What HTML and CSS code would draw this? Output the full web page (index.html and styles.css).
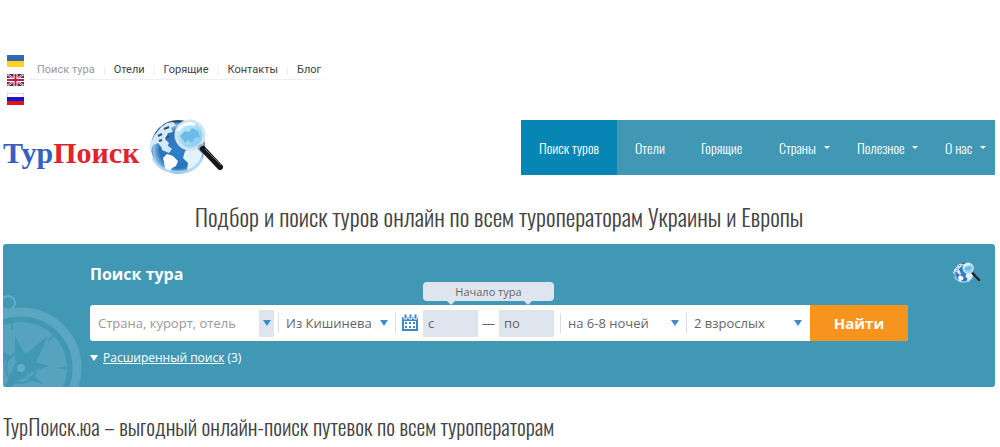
FILE: index.html
```html
<!DOCTYPE html>
<html lang="ru">
<head>
<meta charset="utf-8">
<meta name="viewport" content="width=device-width, initial-scale=1">
<title>ТурПоиск</title>
<link rel="stylesheet" href="styles.css">
</head>
<body>
<svg class="defs" aria-hidden="true">
  <defs>
    <radialGradient id="sea" cx="50%" cy="55%" r="52%">
      <stop offset="0" stop-color="#2f83cc"/>
      <stop offset=".65" stop-color="#2c72b8"/>
      <stop offset=".88" stop-color="#8fc4e8"/>
      <stop offset="1" stop-color="#1d4f80"/>
    </radialGradient>
    <linearGradient id="glass" x1="0" y1="0" x2="1" y2="1">
      <stop offset="0" stop-color="#c9effb"/>
      <stop offset="1" stop-color="#7cc8ef"/>
    </linearGradient>
    <symbol id="globe" viewBox="0 0 76 58">
      <circle cx="29" cy="28" r="27" fill="url(#sea)"/>
      <path d="M5 17 12 8l6-4 6-1 3 3-5 3 2 4-5 1-3 6 4 4-2 4-5 1-4-5-5 2-2 6-2-4zM12 25l6 1 5 4-3 4-7-3z" fill="#d5e8f3"/>
      <path d="M14 39l4-4 6 2 5 5-2 5-4 2-3 6-4-5-1-7z" fill="#fff"/>
      <path d="M36 32l6-3 7 1 4 5-2 8-5 6-3 4-5-2 1-7-5-5z" fill="#e2f1fa"/>
      <path d="M4 39c4 9 13 14 25 14s20-4 24-14" fill="none" stroke="#a8d7f2" stroke-width="3" opacity=".8"/>
      <path d="M9 17l4-2m2-5 5-2m-3 11 3-2M10 22l3-1" stroke="#28547c" stroke-width="2"/>
      <circle cx="41" cy="16" r="14" fill="url(#glass)" stroke="#d3e4ec" stroke-width="3"/>
      <path d="M31 17l5-5 4 1 3-4 6 3 2 6-5 1-3 5-4-3-3 3-3-4z" fill="#6bbce6"/>
      <path d="M29 12c4-7 11-9 17-6" fill="none" stroke="#f4fdff" stroke-width="3"/>
      <path d="M50 26l5 5" stroke="#a3a9ac" stroke-width="4"/>
      <path d="M54 30 71 48" stroke="#17181b" stroke-width="6" stroke-linecap="round"/>
      <path d="M56 30 72 46" stroke="#70757a" stroke-width="1"/>
    </symbol>
  </defs>
</svg>
<div class="page">
  <div class="topbar">
    <div class="langs">
      <a href="#" aria-label="Українська"><svg viewBox="0 0 17 12"><path fill="#3269b1" d="M0 0h17v6H0z"/><path fill="#ffd21c" d="M0 6h17v6H0z"/></svg></a>
      <a href="#" aria-label="English"><svg viewBox="0 0 17 12"><path fill="#273578" d="M0 0h17v12H0z"/><path d="m0 0 17 12M17 0 0 12" stroke="#fff" stroke-width="2"/><path d="m0 0 17 12M17 0 0 12" stroke="#d72b3d" stroke-width="1"/><path d="M8.500 0v12M0 6h17" stroke="#fff" stroke-width="4"/><path d="M8.500 0v12M0 6h17" stroke="#d5182e" stroke-width="2"/></svg></a>
      <a href="#" aria-label="Русский"><svg viewBox="0 0 17 12"><path fill="#fff" stroke="#bbb" d="M0 0h17v12H0z"/><path fill="#1717c8" d="M0 4h17v4H0z"/><path fill="#e3131b" d="M0 8h17v4H0z"/></svg></a>
    </div>
    <nav class="topnav">
      <a class="current" href="#">Поиск тура</a><a href="#">Отели</a><a href="#">Горящие</a><a href="#">Контакты</a><a href="#">Блог</a>
    </nav>
  </div>

  <header class="header">
    <a class="logo" href="#"><span class="logo-text">Тур<span class="logo-red">Поиск</span></span><svg class="logo-globe" aria-hidden="true"><use href="#globe"/></svg></a>
    <nav class="mainnav">
      <a class="active" href="#">Поиск туров</a>
      <a href="#">Отели</a>
      <a href="#">Горящие</a>
      <a class="more" href="#">Страны</a>
      <a class="more" href="#">Полезное</a>
      <a class="more" href="#">О нас</a>
    </nav>
  </header>

  <h1 class="title">Подбор и поиск туров онлайн по всем туроператорам Украины и Европы</h1>

  <section class="panel">
    <svg class="compass" viewBox="0 0 84 94" aria-hidden="true">
      <circle cx="5" cy="10" r="7" fill="none" stroke="#65adc6" stroke-width="2"/>
      <circle cx="18" cy="75" r="56" fill="none" stroke-width="9" stroke="#5ba6c1"/>
      <circle cx="18" cy="75" r="46" fill="#56a3bf"/>
      <g fill="#4198b5">
        <path d="M12 43 20 58 24 69 12 68z"/>
        <path d="M45 43 28 80 0 99 12 70z"/>
        <path d="M28 68 46 73 26 80z"/>
        <path d="m30 82 10 9-16-5zM0 59l10 5-10 5z"/>
      </g>
      <circle cx="18" cy="75" r="15" fill="none" stroke="#4198b5" stroke-width="2"/>
      <path d="M9 30v7M50 43l-5 5M63 75h-6" stroke="#4198b5" stroke-width="2"/>
      <circle cx="18" cy="75" r="4" fill="#65adc6"/>
    </svg>
    <div class="panel-main">
      <h2 class="panel-title">Поиск тура</h2>
      <form class="search">
        <div class="field dest">
          <input type="text" aria-label="Страна, курорт, отель" placeholder="Страна, курорт, отель">
          <button class="drop" type="button" aria-label="Показать список"></button>
        </div>
        <div class="field city"><select aria-label="Город вылета"><option>Из Кишинева</option></select></div>
        <div class="field dates">
          <svg class="calendar" viewBox="0 0 18 18" aria-hidden="true">
            <path d="M1 3h16v14H1z" fill="#3b86cc"/>
            <path d="M3 7h12v8H3z" fill="#fff"/>
            <path d="M3 0h3v5H3zM8 0h3v5H8zM13 0h3v5h-3z" fill="#3b86cc" stroke="#fff" stroke-width="1"/>
            <path d="M4 8h2v2H4zm4 0h2v2H8zm4 0h2v2h-2zM4 12h2v2H4zm4 0h2v2H8zm4 0h2v2h-2z" fill="#3b86cc"/>
          </svg>
          <div class="range">
            <span class="hint">Начало тура</span>
            <input type="text" aria-label="Начало тура с" placeholder="с">
            <span>—</span>
            <input type="text" aria-label="Начало тура по" placeholder="по">
          </div>
        </div>
        <div class="field nights"><select aria-label="Ночей"><option>на 6-8 ночей</option></select></div>
        <div class="field people"><select aria-label="Туристы"><option>2 взрослых</option></select></div>
        <button class="submit" type="submit">Найти</button>
      </form>
      <div class="extra"><a href="#">Расширенный поиск</a> (3)</div>
    </div>
    <svg class="panel-globe" aria-hidden="true"><use href="#globe"/></svg>
  </section>

  <h2 class="subtitle">ТурПоиск.юа – выгодный онлайн-поиск путевок по всем туроператорам</h2>
</div>
</body>
</html>
```
FILE: styles.css
```css
* { box-sizing: border-box; }
body { margin: 0; background: #fff; color: #444; font-family: "Open Sans", "Noto Sans", sans-serif; }
a { color: inherit; text-decoration: none; }
h1, h2 { margin: 0; font-weight: 400; }
.defs { position: absolute; width: 0; height: 0; }
.page { padding: 55px 5px 0 3px; }

.topbar { display: flex; gap: 5px; padding-left: 4px; }
.langs { display: flex; flex-direction: column; gap: 7px; }
.langs a, .langs svg { display: block; width: 17px; height: 12px; }
.topnav { display: flex; align-self: flex-start; height: 25px; padding: 0 0 0 8px; border-bottom: 1px solid #eee; font: 11px/30px Roboto, sans-serif; }
.topnav a + a { margin-left: 9px; padding-left: 10px; background: linear-gradient(#eee, #eee) 0 12px / 1px 8px no-repeat; }
.topnav .current { color: #999; }

.header { display: flex; justify-content: space-between; margin-top: 14px; }
.logo { display: flex; gap: 10px; color: #355fc0; }
.logo-text { font: 700 30px/68px "Liberation Serif", serif; height: 58px; }
.logo-red { color: #e0232f; }
.logo-globe { width: 76px; height: 58px; }
.mainnav { display: grid; grid-template-columns: 96px 66px 78px 78px 88px 68px; height: 55px; margin-top: 1px; background: #4198b5; color: #fff; font: 300 14px/56px Oswald, "Roboto Condensed", "Liberation Sans", sans-serif; }
.mainnav a { height: 55px; padding-left: 18px; white-space: nowrap; }
.mainnav .active { background: #0786b5; }
.more { display: flex; align-items: center; justify-content: space-between; padding-right: 9px; }
.more::after { content: ""; border: 3px solid transparent; border-top-color: #fff; border-bottom: 0; }

.title, .subtitle { font-family: Oswald, "Roboto Condensed", "Liberation Sans", sans-serif; font-weight: 300; }
.title { margin-top: 23px; text-align: center; font-size: 24px; line-height: 32px; }
.subtitle { margin-top: 23px; font-size: 22px; line-height: 32px; }

.panel { position: relative; display: flex; justify-content: space-between; align-items: flex-start; height: 143px; margin-top: 12px; padding: 18px 14px 0 87px; overflow: hidden; border-radius: 3px; background: #4198b5; color: #fff; }
.compass { position: absolute; left: 0; bottom: 0; width: 84px; height: 94px; }
.panel-main { position: relative; flex: 0 1 818px; }
.panel-title { font-size: 16px; font-weight: 700; line-height: 24px; }
.panel-globe { width: 28px; height: 22px; }

.search { display: flex; height: 36px; margin-top: 19px; border-radius: 3px; background: #fff; color: #666; font-size: 13px; }
.search input, .search select, .search button { font: inherit; color: inherit; border: 0; border-radius: 0; min-width: 0; }
.search input::placeholder { color: inherit; opacity: 1; }
.field { display: flex; align-items: center; min-width: 0; background: linear-gradient(#ddd, #ddd) 100% 50% / 1px 20px no-repeat; }
.field select { appearance: none; width: 100%; height: 28px; padding: 0 7px; background: url("data:image/svg+xml,%3Csvg xmlns='http://www.w3.org/2000/svg' width='8' height='6'%3E%3Cpath d='M0 0h8L4 6z' fill='%233b8ccb'/%3E%3C/svg%3E") right 8px center no-repeat; }
.dest { flex: 0 1 189px; padding-right: 5px; }
.dest input { flex: 1; padding: 0 0 0 8px; background: none; }
.dest input::placeholder { color: #999; }
.search .drop { flex: none; width: 15px; height: 27px; padding: 0; background: #dfe5ef url("data:image/svg+xml,%3Csvg xmlns='http://www.w3.org/2000/svg' width='8' height='6'%3E%3Cpath d='M0 0h8L4 6z' fill='%233b8ccb'/%3E%3C/svg%3E") center no-repeat; }
.city { flex: 0 1 117px; }
.dates { flex: 0 0 165px; gap: 4px; padding-left: 5px; }
.calendar { width: 18px; height: 18px; }
.range { position: relative; display: flex; align-items: center; gap: 4px; }
.range input { width: 55px; height: 27px; padding: 0 5px; background: #dfe5ef; }
.hint { position: absolute; left: 0; right: 0; bottom: 36px; height: 19px; border-radius: 4px; background: #dfe5ef; font-size: 11px; line-height: 19px; text-align: center; }
.hint::before, .hint::after { content: ""; position: absolute; top: 100%; left: 18%; border: 4px solid transparent; border-top-color: #dfe5ef; border-bottom: 0; }
.hint::after { left: 77%; }
.nights { flex: 0 1 126px; }
.people { flex: 1 1 122px; background: none; }
.search .submit { flex: 0 0 98px; border-radius: 0 3px 3px 0; background: #f7941d; color: #fff; font-size: 15px; font-weight: 700; }
.extra { display: flex; align-items: center; gap: 3px; margin-top: 7px; font-size: 12px; line-height: 20px; }
.extra::before { content: ""; margin-right: 2px; border: 4px solid transparent; border-top: 6px solid #fff; border-bottom: 0; }
.extra a { text-decoration: underline; }
```
